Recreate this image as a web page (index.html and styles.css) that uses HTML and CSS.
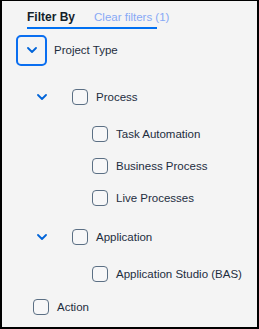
FILE: index.html
```html
<!DOCTYPE html>
<html>
<head>
<meta charset="utf-8">
<link rel="stylesheet" href="styles.css">
</head>
<body>
<div class="panel">
  <div class="tabs">
    <span class="tab active">Filter By</span>
    <span class="tab link">Clear filters (1)</span>
  </div>

  <div class="row top">
    <button class="toggle focus" aria-label="collapse">
      <svg width="10" height="6" viewBox="0 0 10 6"><path d="M1 1 L5 5 L9 1" fill="none" stroke="#0064d9" stroke-width="1.8" stroke-linecap="round" stroke-linejoin="round"/></svg>
    </button>
    <span class="label">Project Type</span>
  </div>

  <div class="row lvl2 first">
    <span class="chev">
      <svg width="10" height="6" viewBox="0 0 10 6"><path d="M1 1 L5 5 L9 1" fill="none" stroke="#0064d9" stroke-width="1.8" stroke-linecap="round" stroke-linejoin="round"/></svg>
    </span>
    <span class="box"></span>
    <span class="label">Process</span>
  </div>
  <div class="group">
    <div class="row lvl3"><span class="box"></span><span class="label">Task Automation</span></div>
    <div class="row lvl3"><span class="box"></span><span class="label">Business Process</span></div>
    <div class="row lvl3"><span class="box"></span><span class="label">Live Processes</span></div>
  </div>

  <div class="row lvl2 second">
    <span class="chev">
      <svg width="10" height="6" viewBox="0 0 10 6"><path d="M1 1 L5 5 L9 1" fill="none" stroke="#0064d9" stroke-width="1.8" stroke-linecap="round" stroke-linejoin="round"/></svg>
    </span>
    <span class="box"></span>
    <span class="label">Application</span>
  </div>
  <div class="group">
    <div class="row lvl3"><span class="box"></span><span class="label">Application Studio (BAS)</span></div>
  </div>

  <div class="row lvl1 action"><span class="box"></span><span class="label">Action</span></div>
</div>
</body>
</html>
```

FILE: styles.css
```css
html, body {
  margin: 0;
  padding: 0;
  background: #f4f4f4;
}

.panel {
  width: 259px;
  height: 329px;
  box-sizing: border-box;
  border: 2px solid #000;
  border-top-width: 1px;
  background: #f4f4f4;
  font-family: "Liberation Sans", Arial, sans-serif;
  color: #1d2d3e;
  overflow: hidden;
}

.tabs {
  display: flex;
  gap: 19px;
  width: 130px;
  margin-left: 25px;
  padding-top: 8px;
  padding-bottom: 2px;
  border-bottom: 2px solid #0070f2;
  white-space: nowrap;
  line-height: 16px;
}

.tab {
  font-size: 11.5px;
}

.tab.active {
  font-size: 12px;
  font-weight: bold;
  color: #131e29;
}

.tab.link {
  color: #87a9f6;
}

.row {
  display: flex;
  align-items: center;
  height: 32px;
}

.label {
  font-size: 11.5px;
  white-space: nowrap;
}

.top {
  margin-top: 5px;
  padding-left: 14px;
}

.toggle {
  width: 31px;
  height: 31px;
  box-sizing: border-box;
  border: 2px solid #0a6ef0;
  border-radius: 5px;
  background: transparent;
  display: flex;
  align-items: center;
  justify-content: center;
  padding: 0;
  margin-right: 7px;
}

.toggle svg, .chev svg {
  display: block;
}

.lvl2 {
  padding-left: 35px;
}

.lvl2.first {
  margin-top: 15px;
}

.lvl2.second {
  margin-top: 7px;
}

.chev {
  width: 10px;
  display: flex;
  align-items: center;
  margin-right: 25px;
}

.box {
  width: 16px;
  height: 16px;
  box-sizing: border-box;
  border: 1.3px solid #5b6f84;
  border-radius: 4px;
  background: #f7f7f8;
  margin-right: 8px;
  flex: none;
}

.group {
  padding-top: 5px;
}

.lvl3 {
  padding-left: 90px;
}

.lvl1 {
  padding-left: 31px;
}

.action {
  margin-top: 1px;
}
```
